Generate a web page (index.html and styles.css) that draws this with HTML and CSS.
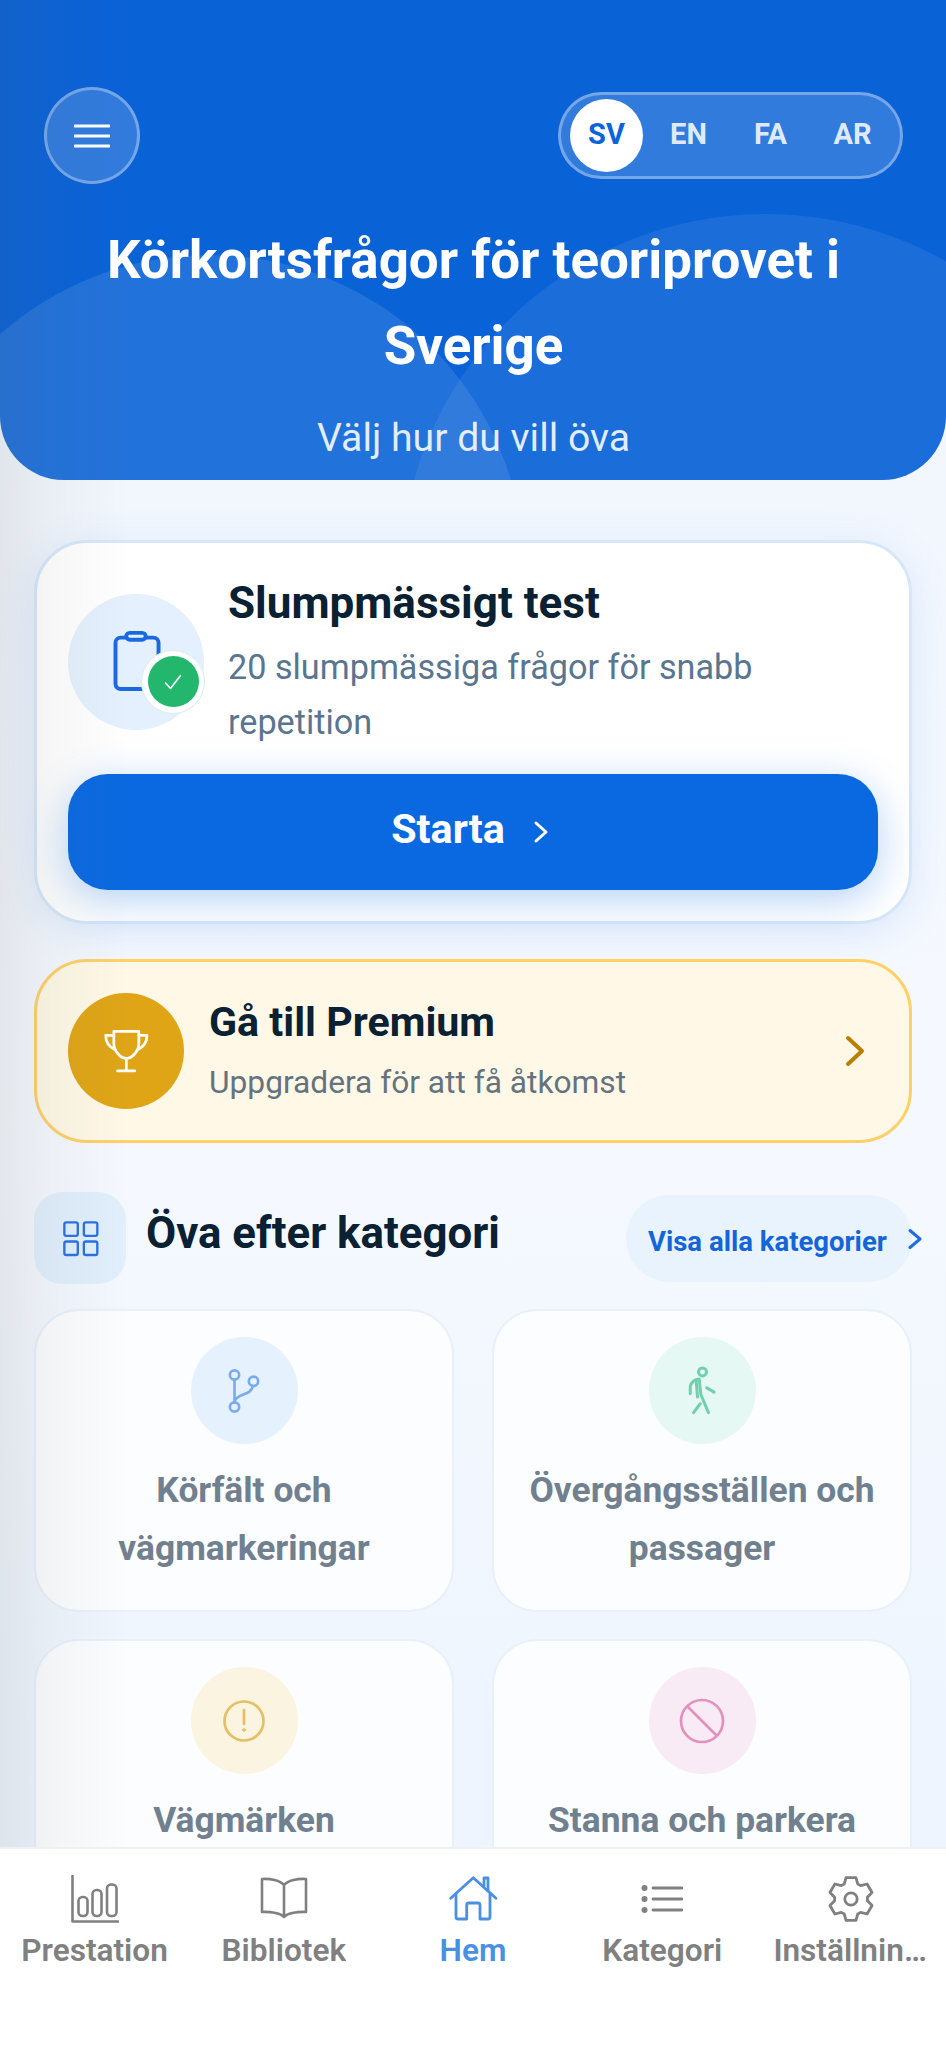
FILE: index.html
```html
<!DOCTYPE html>
<html lang="sv">
<head>
<meta charset="utf-8">
<title>Körkortsfrågor</title>
<link rel="stylesheet" href="styles.css">
</head>
<body>
<div class="page">
  <header class="hero">
    <span class="blob blob-left"></span>
    <span class="blob blob-right"></span>
    <div class="hero-top">
      <button class="menu-btn" type="button" aria-label="Meny">
        <svg width="36" height="24" viewBox="0 0 36 24"><path d="M1 2H35M1 12H35M1 22H35" fill="none" stroke="#fff" stroke-width="3" stroke-linecap="round"/></svg>
      </button>
      <div class="lang">
        <span class="lang-item is-active">SV</span>
        <span class="lang-item">EN</span>
        <span class="lang-item">FA</span>
        <span class="lang-item">AR</span>
      </div>
    </div>
    <h1 class="hero-title">Körkortsfrågor för teoriprovet i Sverige</h1>
    <p class="hero-sub">Välj hur du vill öva</p>
  </header>

  <main class="content">
    <section class="quiz-card">
      <div class="quiz-row">
        <div class="quiz-icon">
          <svg width="63" height="63" viewBox="0 0 24 24" fill="none" stroke="#1a6adf" stroke-width="1.5"><rect x="4" y="2.9" width="16.4" height="19.6" rx="2"/><rect x="8.1" y="1.1" width="7.4" height="2.6" rx="1.3" fill="#e4f0fd"/></svg>
          <span class="quiz-badge"><span class="quiz-badge-in">
            <svg width="18" height="16" viewBox="0 0 18 16" fill="none" stroke="#fff" stroke-width="1.6" stroke-linecap="round" stroke-linejoin="round"><path d="M1.5 9L6.5 14.5L16.5 1.5"/></svg>
          </span></span>
        </div>
        <div class="quiz-text">
          <h2 class="quiz-title">Slumpmässigt test</h2>
          <p class="quiz-desc">20 slumpmässiga frågor för snabb repetition</p>
        </div>
      </div>
      <button class="start-btn" type="button">
        <span class="start-label">Starta</span>
        <svg width="24" height="24" viewBox="0 0 24 24" fill="none" stroke="#fff" stroke-width="3" stroke-linecap="round" stroke-linejoin="round"><path d="M5 3L15 12L5 21"/></svg>
      </button>
    </section>

    <section class="premium">
      <div class="premium-icon">
        <svg width="46" height="46" viewBox="250 235 136 136" fill="none" stroke="#fff" stroke-width="8" stroke-linecap="round" stroke-linejoin="round"><path d="M282 245H356V280C356 305 335 325 319 325C303 325 282 305 282 280Z"/><path d="M319 325V362M293 362H344"/><path d="M282 257H258C258 275 265 290 287 300M356 257H380C380 275 373 290 351 300"/></svg>
      </div>
      <div class="premium-text">
        <h2 class="premium-title">Gå till Premium</h2>
        <p class="premium-sub">Uppgradera för att få åtkomst</p>
      </div>
      <svg class="premium-chev" width="20" height="32" viewBox="0 0 20 32" fill="none" stroke="#b97f00" stroke-width="4" stroke-linecap="round" stroke-linejoin="round"><path d="M3 3L17 16L3 29"/></svg>
    </section>

    <div class="section-head">
      <span class="section-icon">
        <svg width="37" height="37" viewBox="125 808 110 110" fill="none" stroke="#2a72de" stroke-width="7"><rect x="132" y="815" width="40" height="40" rx="6"/><rect x="190" y="815" width="40" height="40" rx="6"/><rect x="132" y="872" width="40" height="40" rx="6"/><rect x="190" y="872" width="40" height="40" rx="6"/></svg>
      </span>
      <h2 class="section-title">Öva efter kategori</h2>
      <a class="see-all"><span class="see-all-text">Visa alla kategorier</span>
        <svg class="see-all-chev" width="14" height="22" viewBox="0 0 14 22" fill="none" stroke="#1f6fe0" stroke-width="3" stroke-linecap="round" stroke-linejoin="round"><path d="M2 2.500L12 11L2 19.500"/></svg>
      </a>
    </div>

    <div class="cat-grid">
      <article class="cat-card">
        <span class="cat-icon cat-blue">
          <svg width="37" height="50" viewBox="680 195 110 150" fill="none" stroke="#78aced" stroke-width="8" stroke-linecap="round"><circle cx="705" cy="222" r="14"/><circle cx="762" cy="241" r="14"/><circle cx="705" cy="318" r="14"/><path d="M705 236V304M760 255C755 285 715 275 705 300"/></svg>
        </span>
        <h3 class="cat-name">Körfält och vägmarkeringar</h3>
      </article>
      <article class="cat-card">
        <span class="cat-icon cat-green">
          <svg width="37" height="53" viewBox="130 100 110 160" fill="none" stroke="#72cfae" stroke-width="9" stroke-linecap="round" stroke-linejoin="round"><circle cx="185" cy="124" r="12"/><path d="M148 190V168C150 155 162 146 175 145L180 192L203 247M178 220L158 247M198 172L220 185M166 152L170 200"/></svg>
        </span>
        <h3 class="cat-name">Övergångsställen och passager</h3>
      </article>
      <article class="cat-card">
        <span class="cat-icon cat-yellow">
          <svg width="46" height="46" viewBox="0 0 46 46" fill="none" stroke="#e5bf66" stroke-width="2.700" stroke-linecap="round"><circle cx="23" cy="23" r="19.500"/><path d="M23 12V26"/><circle cx="23" cy="32" r="1.300" fill="#e5bf66" stroke-width="1"/></svg>
        </span>
        <h3 class="cat-name">Vägmärken</h3>
      </article>
      <article class="cat-card">
        <span class="cat-icon cat-pink">
          <svg width="48" height="48" viewBox="0 0 48 48" fill="none" stroke="#e191bb" stroke-width="2.700"><circle cx="24" cy="24" r="21"/><path d="M9.500 9.500L38.500 38.500"/></svg>
        </span>
        <h3 class="cat-name">Stanna och parkera</h3>
      </article>
    </div>
  </main>

  <span class="edge-shade"></span>

  <nav class="tabbar">
    <a class="tab">
      <svg class="tab-icon" width="48" height="48" viewBox="0 0 48 48" fill="none" stroke="#808080" stroke-width="2.600" stroke-linecap="round" stroke-linejoin="round"><path d="M1.500 1V46.500H47"/><rect x="7.500" y="22" width="9" height="19" rx="4"/><rect x="21.500" y="15" width="9" height="26" rx="4"/><rect x="36" y="9.500" width="9.500" height="31.500" rx="4"/></svg>
      <span class="tab-label">Prestation</span>
    </a>
    <a class="tab">
      <svg class="tab-icon" width="48" height="48" viewBox="0 0 48 48" fill="none" stroke="#808080" stroke-width="2.600" stroke-linecap="round" stroke-linejoin="round"><path d="M24 10C20 5 10 3.500 2 4V37C10 36.500 20 38 24 42C28 38 38 36.500 46 37V4C38 3.500 28 5 24 10ZM24 10V42"/></svg>
      <span class="tab-label">Bibliotek</span>
    </a>
    <a class="tab is-active">
      <svg class="tab-icon" width="52" height="48" viewBox="17 14 52 48" fill="none" stroke="#4a90e2" stroke-width="2.800" stroke-linecap="round" stroke-linejoin="round"><path d="M20.700 37.300L43.300 16.700L66 37.300"/><path d="M26 33V56Q26 58 28 58H36.700V44Q36.700 42 38.700 42H48Q50 42 50 44V58H58Q60 58 60 56V33"/><path d="M54 25V17H58V30"/></svg>
      <span class="tab-label">Hem</span>
    </a>
    <a class="tab">
      <svg class="tab-icon" width="42" height="48" viewBox="0 0 42 48" fill="none" stroke="#808080" stroke-width="2.800" stroke-linecap="round"><path d="M12 13H41M12 24H41M12 35H41"/><circle cx="3.500" cy="13" r="3" fill="#808080" stroke="none"/><circle cx="3.500" cy="24" r="3" fill="#808080" stroke="none"/><circle cx="3.500" cy="35" r="3" fill="#808080" stroke="none"/></svg>
      <span class="tab-label">Kategori</span>
    </a>
    <a class="tab">
      <svg class="tab-icon" width="48" height="48" viewBox="0 0 48 48" fill="none" stroke="#808080" stroke-width="2.800" stroke-linejoin="round"><path d="M19.050 2.560L28.950 2.560L30.710 8.930L33.700 10.650L40.090 9L45.040 17.570L40.410 22.280V25.720L45.040 30.430L40.090 39L33.700 37.350L30.710 39.070L28.950 45.440H19.050L17.290 39.070L14.300 37.350L7.910 39L2.960 30.430L7.590 25.720V22.280L2.960 17.570L7.910 9L14.300 10.650L17.290 8.930Z"/><circle cx="24" cy="24" r="6.200"/></svg>
      <span class="tab-label">Inställningar</span>
    </a>
  </nav>
</div>
</body>
</html>
```

FILE: styles.css
```css
* { box-sizing: border-box; }
html, body { margin: 0; padding: 0; }
body { font-family: Roboto, "Noto Sans", sans-serif; background: #f5f9ff; }
h1, h2, h3, p { margin: 0; }

.page {
  position: relative;
  width: 946px;
  height: 2048px;
  display: flex;
  flex-direction: column;
  overflow: hidden;
  background: linear-gradient(#f0f5fd 0%, #f5f9ff 55%, #eff5fe 85%);
}

/* hero */
.hero {
  position: relative;
  flex: none;
  height: 480px;
  padding: 87px 43px 0 44px;
  background: #0a62d7;
  border-radius: 0 0 64px 64px;
  overflow: hidden;
  text-align: center;
  color: #fff;
}
.blob {
  position: absolute;
  border-radius: 50%;
}
.blob-left { left: -106px; top: 255px; width: 630px; height: 630px; background: rgba(255, 255, 255, 0.1); }
.blob-right { left: 400px; top: 214px; width: 732px; height: 732px; background: rgba(255, 255, 255, 0.07); }
.hero-top {
  position: relative;
  display: flex;
  justify-content: space-between;
  align-items: flex-start;
}
.menu-btn {
  width: 96px;
  height: 97px;
  padding: 0;
  border-radius: 50%;
  border: 3px solid rgba(255, 255, 255, 0.33);
  background: rgba(255, 255, 255, 0.16);
  display: flex;
  align-items: center;
  justify-content: center;
}
.lang {
  margin-top: 5px;
  height: 87px;
  width: 345px;
  padding: 0 8px 0 9px;
  display: flex;
  align-items: center;
  gap: 9px;
  border-radius: 44px;
  border: 3px solid rgba(255, 255, 255, 0.33);
  background: rgba(255, 255, 255, 0.16);
}
.lang-item {
  width: 73px;
  height: 73px;
  padding-bottom: 3px;
  border-radius: 50%;
  display: flex;
  align-items: center;
  justify-content: center;
  font-size: 29px;
  font-weight: 700;
  color: rgba(255, 255, 255, 0.86);
}
.lang-item.is-active { background: #fff; color: #0a64d9; }
.hero-title {
  position: relative;
  margin: 33px -10px 0;
  font-size: 52.900px;
  line-height: 86px;
  font-weight: 700;
}
.hero-sub {
  position: relative;
  margin-top: 19px;
  font-size: 39.200px;
  line-height: 60px;
  font-weight: 400;
  color: rgba(255, 255, 255, 0.88);
}

/* content */
.content {
  flex: 1;
  min-height: 0;
  overflow: hidden;
  padding: 60px 34px 0;
}
.quiz-card {
  height: 384px;
  padding: 0 31px;
  background: #fff;
  border: 3px solid #d7e7f8;
  border-radius: 53px;
  box-shadow: 0 8px 44px rgba(10, 100, 220, 0.1);
}
.quiz-row {
  height: 231px;
  padding-top: 6px;
  display: flex;
  align-items: center;
  gap: 24px;
}
.quiz-icon {
  position: relative;
  flex: none;
  width: 136px;
  height: 136px;
  border-radius: 50%;
  background: #e4f0fd;
  display: flex;
  align-items: center;
  justify-content: center;
}
.quiz-badge {
  position: absolute;
  left: 73px;
  top: 56px;
  width: 64px;
  height: 64px;
  border-radius: 50%;
  background: #fff;
  border: 1px solid #d8f0e6;
  display: flex;
  align-items: center;
  justify-content: center;
}
.quiz-badge-in {
  width: 51px;
  height: 51px;
  border-radius: 50%;
  background: #22b76c;
  display: flex;
  align-items: center;
  justify-content: center;
}
.quiz-title {
  font-size: 44px;
  line-height: 60px;
  font-weight: 700;
  color: #0a2033;
}
.quiz-desc {
  margin-top: 7px;
  font-size: 34.200px;
  line-height: 55px;
  color: #5a7590;
}
.start-btn {
  width: 100%;
  height: 116px;
  margin-top: 0;
  padding: 0;
  border: 0;
  border-radius: 40px;
  background: #0a69e0;
  box-shadow: 0 10px 40px rgba(10, 105, 224, 0.3);
  display: flex;
  align-items: center;
  justify-content: center;
  gap: 26px;
  font-family: inherit;
  font-size: 41.300px;
  font-weight: 700;
  color: #fff;
}
.start-label { padding-bottom: 6px; }

.premium {
  margin-top: 35px;
  height: 184px;
  padding: 0 44px 0 31px;
  display: flex;
  align-items: center;
  background: #fff8e6;
  border: 3px solid #fdd06a;
  border-radius: 53px;
}
.premium-icon {
  flex: none;
  width: 116px;
  height: 116px;
  border-radius: 50%;
  background: #dfa517;
  display: flex;
  align-items: center;
  justify-content: center;
}
.premium-text { flex: 1; margin: 0 0 3px 25px; }
.premium-title {
  font-size: 41.200px;
  line-height: 60px;
  font-weight: 700;
  color: #0a2033;
}
.premium-sub {
  margin-top: 6px;
  font-size: 31.700px;
  line-height: 50px;
  color: #64737f;
}
.premium-chev { flex: none; }

.section-head {
  margin-top: 49px;
  height: 92px;
  display: flex;
  align-items: center;
}
.section-icon {
  flex: none;
  width: 92px;
  height: 92px;
  border-radius: 28px;
  background: #e1effd;
  display: flex;
  align-items: center;
  justify-content: center;
}
.section-title {
  flex: 1;
  margin-left: 20px;
  margin-bottom: 10px;
  font-size: 43.800px;
  line-height: 60px;
  font-weight: 700;
  color: #0a2033;
}
.see-all {
  flex: none;
  align-self: flex-start;
  width: 286px;
  height: 87px;
  padding-left: 22px;
  margin-top: 3px;
  display: flex;
  align-items: center;
  white-space: nowrap;
  border-radius: 44px;
  background: #e8f3fe;
  color: #1565d8;
  font-size: 27.500px;
  font-weight: 700;
}
.see-all-text { flex: none; padding-top: 6px; }
.see-all-chev { flex: none; margin-left: 21px; }

.cat-grid {
  margin-top: 25px;
  display: grid;
  grid-template-columns: 1fr 1fr;
  column-gap: 38px;
  row-gap: 27px;
}
.cat-card {
  height: 303px;
  padding: 26px 10px 0;
  background: #fbfdff;
  border: 2px solid #e8f0f9;
  border-radius: 45px;
  text-align: center;
}
.cat-icon {
  width: 107px;
  height: 107px;
  margin: 0 auto;
  border-radius: 50%;
  display: flex;
  align-items: center;
  justify-content: center;
}
.cat-blue { background: #e6f1fe; }
.cat-green { background: #e6f8f3; }
.cat-yellow { background: #faf4e0; }
.cat-pink { background: #f9ebf6; }
.cat-name {
  margin-top: 17px;
  font-size: 35.400px;
  line-height: 58px;
  font-weight: 700;
  color: #71808f;
}

.edge-shade {
  position: absolute;
  left: 0;
  top: 0;
  bottom: 201px;
  width: 130px;
  background: linear-gradient(to right, rgba(85, 90, 90, 0.11), rgba(85, 90, 90, 0.05) 40%, rgba(85, 90, 90, 0));
  pointer-events: none;
}

/* tab bar */
.tabbar {
  position: relative;
  flex: none;
  height: 201px;
  display: grid;
  grid-template-columns: repeat(5, 1fr);
  background: #fff;
  border-top: 2px solid #eef0f3;
}
.tab {
  padding-top: 26px;
  display: flex;
  flex-direction: column;
  align-items: center;
  min-width: 0;
  color: #808080;
}
.tab-icon { flex: none; }
.tab-label {
  max-width: 156px;
  margin-top: 4px;
  font-size: 31.600px;
  line-height: 48px;
  font-weight: 600;
  white-space: nowrap;
  overflow: hidden;
  text-overflow: ellipsis;
}
.tab.is-active { color: #4a90e2; }
```
